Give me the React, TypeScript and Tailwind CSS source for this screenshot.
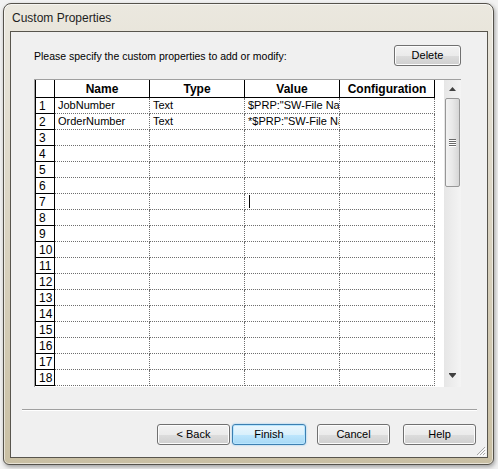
import React from 'react'

const COLUMNS = ['Name', 'Type', 'Value', 'Configuration']

const ROWS: string[][] = [
  ['JobNumber', 'Text', '$PRP:"SW-File Name"', ''],
  ['OrderNumber', 'Text', '*$PRP:"SW-File Name"', ''],
]

const FONT = "font-['Liberation_Sans',Arial,sans-serif]"

function Button({ label, width, primary }: { label: string; width: string; primary?: boolean }) {
  const look = primary
    ? 'border-[#3c7fb1] bg-[linear-gradient(to_bottom,#eaf6fd_0%,#d9f0fc_50%,#bee6fd_50%,#a7d9f5_100%)] shadow-[inset_0_0_0_1px_#b8e6ff,0_0_2px_#7ec3f0]'
    : 'border-[#707070] bg-[linear-gradient(to_bottom,#f2f2f2_0%,#ebebeb_50%,#dddddd_50%,#cfcfcf_100%)] shadow-[inset_0_0_0_1px_#fcfcfc]'
  return (
    <button className={`${width} h-[21px] rounded-[3px] border text-[11px] text-black flex items-center justify-center ${look}`}>
      {label}
    </button>
  )
}

function Scrollbar() {
  return (
    <div className="w-[17px] h-full flex flex-col items-center bg-[linear-gradient(to_right,#e6e6e6,#f4f4f4)]">
      <div className="h-[18px] w-full flex items-center justify-center">
        <svg width="7" height="4" viewBox="0 0 7 4">
          <path d="M3.5 0 L7 4 L0 4 Z" fill="#404040" />
        </svg>
      </div>
      <div className="w-[15px] h-[89px] rounded-[2px] border border-[#979797] bg-[linear-gradient(to_right,#f3f3f3,#e8e8e8_50%,#d6d6d6)] flex items-center justify-center">
        <div className="flex flex-col gap-[1px]">
          {[0, 1, 2, 3].map(i => (
            <div key={i} className="w-[7px] h-[1px] bg-[#6a6a6a] shadow-[0_1px_0_#ffffff]" />
          ))}
        </div>
      </div>
      <div className="flex-1" />
      <div className="h-[18px] w-full flex items-center justify-center mb-[3px]">
        <svg width="7" height="5" viewBox="0 0 7 5">
          <rect x="0" y="0" width="7" height="1" fill="#404040" />
          <path d="M0 1 L7 1 L3.5 5 Z" fill="#404040" />
        </svg>
      </div>
    </div>
  )
}

function Grid() {
  const rows = Array.from({ length: 18 }, (_, i) => ROWS[i] ?? ['', '', '', ''])
  return (
    <div className="ml-[23px] mt-[13px] w-[427px] h-[308px] border-l border-t border-[#a0a0a0] bg-white flex overflow-hidden">
      <div className="w-[409px] h-full overflow-hidden">
        <div className="flex h-[18px]">
          <div className="w-[20px] h-full border-l border-r border-b border-black bg-white" />
          {COLUMNS.map(c => (
            <div
              key={c}
              className="w-[95px] h-full border-r border-b border-black bg-white flex items-center justify-center text-[12px] font-bold text-black"
            >
              {c}
            </div>
          ))}
        </div>
        {rows.map((r, i) => (
          <div key={i} className="flex h-[16px]">
            <div className="w-[20px] h-full border-l border-r border-b border-black bg-white flex items-center pl-[3px] text-[12px] text-black">
              {i + 1}
            </div>
            {r.map((v, j) => (
              <div
                key={j}
                className="w-[95px] h-full border-r border-b border-dotted border-[#6e6e6e] flex items-center pl-[3px] text-[11px] text-black whitespace-nowrap overflow-hidden"
              >
                {i === 6 && j === 2 ? <div className="w-[1px] h-[13px] bg-black ml-[1px]" /> : v}
              </div>
            ))}
          </div>
        ))}
      </div>
      <Scrollbar />
    </div>
  )
}

export default function App() {
  return (
    <div className={`w-[498px] h-[469px] bg-[#f2f2f2] pt-[3px] pl-[3px] ${FONT}`}>
      <div className="w-[491px] h-[462px] rounded-t-[8px] rounded-b-[6px] border border-[#55524b] bg-[linear-gradient(to_bottom,#ebe8df,#ddd7c7_40%,#c9bfa3)] shadow-[inset_0_0_0_1px_rgba(255,255,255,0.55),1px_2px_4px_rgba(0,0,0,0.35)]">
        <div className="h-[27px] flex items-center pl-[8px] text-[12px] text-[#1e1e1e]">Custom Properties</div>
        <div className="relative ml-[6px] w-[478px] h-[427px] border border-[#58554d] bg-[#f0f0f0]">
          <div className="flex items-center justify-between pt-[13px] pl-[23px] pr-[26px]">
            <span className="text-[10.5px] text-black mt-[2px]">Please specify the custom properties to add or modify:</span>
            <Button label="Delete" width="w-[67px]" />
          </div>

          <Grid />

          <div className="ml-[11px] mt-[22px] w-[455px] h-[1px] bg-[#a0a0a0] shadow-[0_1px_0_#ffffff]" />

          <div className="flex justify-end pr-[11px] mt-[14px]">
            <Button label="< Back" width="w-[73px]" />
            <div className="w-[2px]" />
            <Button label="Finish" width="w-[74px]" primary />
            <div className="w-[11px]" />
            <Button label="Cancel" width="w-[73px]" />
            <div className="w-[13px]" />
            <Button label="Help" width="w-[73px]" />
          </div>

          <svg className="absolute right-[1px] bottom-[1px]" width="11" height="11" viewBox="0 0 11 11">
            <path d="M10 2 L2 10 M10 5 L5 10 M10 8 L8 10" stroke="#a8a8a8" strokeWidth="1" />
            <path d="M11 3 L3 11 M11 6 L6 11 M11 9 L9 11" stroke="#ffffff" strokeWidth="1" />
          </svg>
        </div>
      </div>
    </div>
  )
}
